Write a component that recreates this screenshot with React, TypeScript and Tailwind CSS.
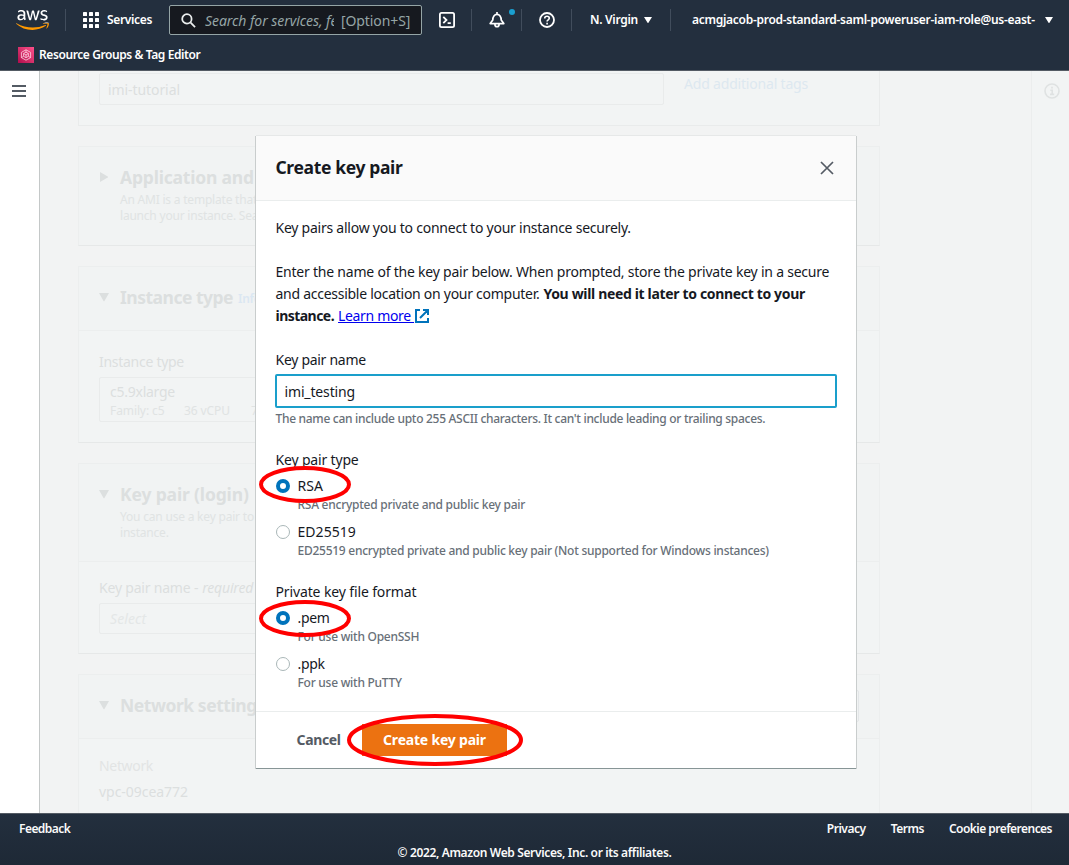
import React from "react";
import { FaAws } from "react-icons/fa";

function T({ c = "", children }: { c?: string; children: React.ReactNode }) {
  return <span className={"whitespace-nowrap " + c}>{children}</span>;
}

function Logo() {
  return (
    <div className="grid h-[28px] w-[33px] place-items-center">
      <FaAws className="col-start-1 row-start-1 h-[28px] w-[33px] text-white [clip-path:inset(0_0_38%_0)]" />
      <FaAws className="col-start-1 row-start-1 h-[28px] w-[33px] text-[#ff9900] [clip-path:inset(62%_0_0_0)]" />
    </div>
  );
}

function Divider({ c }: { c: string }) {
  return <span className={"h-[22px] w-px shrink-0 bg-[#414d5c] " + c} />;
}

function Caret() {
  return (
    <svg viewBox="0 0 8 6" className="h-[6px] w-[8px] shrink-0" fill="currentColor">
      <path d="M0 0h8L4.6 5.6a.7.7 0 0 1-1.2 0z" />
    </svg>
  );
}

function Header() {
  return (
    <header className="flex h-[71px] shrink-0 flex-col border-b border-[#545b64] bg-[#232f3e] text-white">
      <div className="flex h-[40px] items-center text-[12px] font-semibold leading-[20px]">
        <div className="ml-[16px]"><Logo /></div>
        <Divider c="ml-[16px]" />
        <svg viewBox="0 0 16 16" className="ml-[17px] h-[16px] w-[16px] shrink-0" fill="currentColor">
          {[0, 6, 12].map((y) => [0, 6, 12].map((x) => <rect key={x + "-" + y} x={x} y={y} width="4" height="4" rx=".6" />))}
        </svg>
        <T c="ml-[8px] w-[62px] shrink-0 tracking-[-0.34px]">Services</T>
        <div className="flex h-[30px] w-[253px] shrink-0 items-center rounded-[2px] border border-[#95a5a6] bg-[#16191f] text-[14px] font-normal text-[#95a5a6]">
          <svg viewBox="0 0 16 16" className="ml-[11px] h-[15px] w-[15px] shrink-0" fill="none" stroke="#eaeded" strokeWidth="1.9">
            <circle cx="6.3" cy="6.3" r="5" /><path d="m10 10 5 5" />
          </svg>
          <div className="ml-[9px] w-[129px] overflow-hidden whitespace-nowrap pt-px italic"><T c="tracking-[-0.06px]">Search for services, fe</T></div>
          <T c="ml-[7px] pt-px tracking-[-0.1px]">[Option+S]</T>
        </div>
        <svg viewBox="0 0 16 16" className="ml-[17px] h-[16px] w-[16px] shrink-0" fill="none" stroke="currentColor" strokeWidth="1.8">
          <rect x=".9" y=".9" width="14.2" height="14.2" rx="1.6" /><path d="M4.3 4.8 7.5 8l-3.2 3.2M8.6 11.2h3.2" />
        </svg>
        <Divider c="ml-[16px]" />
        <div className="relative ml-[17px] h-[16px] w-[16px] shrink-0">
          <svg viewBox="0 0 16 16" className="h-[16px] w-[16px]" fill="none" stroke="currentColor" strokeWidth="1.7">
            <path d="M8 0v2.2M1.2 11.6h13.6L12.2 8C12.2 4.6 10.600 2.400 8 2.400S3.800 4.600 3.800 8zM5.900 12.200a2.100 2.500 0 0 0 4.200 0" strokeLinejoin="round" />
          </svg>
          <span className="absolute left-[20px] top-[-3px] h-[6px] w-[6px] rounded-full bg-[#1a9fd0]" />
        </div>
        <Divider c="ml-[16px]" />
        <svg viewBox="0 0 16 16" className="ml-[17px] h-[16px] w-[16px] shrink-0" fill="none" stroke="currentColor" strokeWidth="1.8">
          <circle cx="8" cy="8" r="7" /><path d="M5.7 6.4c0-1.4 1-2.1 2.3-2.1s2.3.8 2.3 2c0 1.5-2.2 1.5-2.2 3.1M8.1 10.7v1.8" strokeWidth="1.6" />
        </svg>
        <Divider c="ml-[16px]" />
        <T c="ml-[18px] w-[54px] shrink-0 tracking-[-0.29px]">N. Virgin</T>
        <Caret />
        <Divider c="ml-[18px]" />
        <T c="ml-[21px] w-[353px] shrink-0 tracking-[-0.28px]">acmgjacob-prod-standard-saml-poweruser-iam-role@us-east-</T>
        <Caret />
      </div>
      <div className="flex h-[30px] items-center pl-[18px] text-[12px] font-semibold leading-[20px]">
        <span className="flex h-[16px] w-[16px] items-center justify-center bg-gradient-to-tr from-[#b0084d] to-[#ff4f8b]">
          <svg viewBox="0 0 12 12" className="h-[12px] w-[12px]" fill="none" stroke="#ffd5e4" strokeWidth=".8">
            <path d="M6 .8 10.6 3.4v5.2L6 11.2 1.4 8.6V3.4zM3.6 4.5 6 3.2l2.4 1.3v2.8L6 8.7 3.6 7.3zM6 6v2.7M3.6 4.5 6 6l2.4-1.5M1.4 8.6l2.2-1.3M10.6 8.6 8.4 7.3M6 .8v2.4" />
          </svg>
        </span>
        <T c="ml-[5px] tracking-[-0.41px]">Resource Groups &amp; Tag Editor</T>
      </div>
    </header>
  );
}

function SectionTitle({ open, c, children }: { open: boolean; c: string; children: React.ReactNode }) {
  return (
    <div className="flex h-[24px] items-center text-[17.5px] font-bold leading-[24px] text-[#dcdfdf]">
      <span className="w-[21px] shrink-0">
        <svg viewBox="0 0 10 10" className="h-[10px] w-[10px]" fill="currentColor">
          {open ? <path d="M0 1h10L5.6 8.7a.7.7 0 0 1-1.2 0z" /> : <path d="M1 0v10l7.7-4.4a.7.7 0 0 0 0-1.2z" />}
        </svg>
      </span>
      <T c={c}>{children}</T>
    </div>
  );
}

function Background() {
  return (
    <div className="flex h-[742px] grow overflow-hidden bg-[#f2f3f3] pl-[38px] text-[14px] leading-[22px] text-[#dcdfdf]">
      <div className="flex w-[802px] flex-col gap-[20px]">
        <section className="flex h-[55px] shrink-0 border border-t-0 border-[#e9ebeb] bg-[#f2f4f4] pl-[20px]">
          <div className="mt-[2px] h-[32px] w-[565px] rounded-[2px] border border-[#e9ebeb] px-[8px] pt-[5px]"><T c="tracking-[-0.08px]">imi-tutorial</T></div>
          <T c="ml-[20px] mt-[2px] text-[#dde8f0] tracking-[-0.19px]">Add additional tags</T>
        </section>
        <section className="h-[100px] shrink-0 border border-[#eceeee] border-b-[#e6e8e8] bg-[#f1f3f3] pl-[20px] pt-[18px]">
          <SectionTitle open={false} c="tracking-[-0.2px]">Application and</SectionTitle>
          <div className="flex flex-col pl-[21px] pt-[3px] text-[12px] leading-[16px] text-[#e0e3e3] tracking-[-0.21px]">
            <T>An AMI is a template that</T>
            <T>launch your instance. Sea</T>
          </div>
        </section>
        <section className="h-[177px] shrink-0 border border-[#eceeee] border-b-[#e6e8e8] bg-[#f2f4f4]">
          <div className="flex h-[64px] border-b border-[#eceeee] bg-[#f1f3f3] pl-[20px] pt-[18px]">
            <SectionTitle open c="tracking-[-0.5px]">Instance type</SectionTitle>
            <T c="ml-[5px] mt-[4px] text-[12px] font-semibold text-[#dbe7f2] leading-[20px] tracking-[-0.3px]">Info</T>
          </div>
          <div className="flex flex-col pl-[20px] pt-[20px]">
            <T c="tracking-[-0.28px]">Instance type</T>
            <div className="mt-[4px] h-[45px] w-[600px] rounded-[2px] border border-[#e9ebeb] px-[10px] pt-[3px]">
              <T c="tracking-[-0.25px]">c5.9xlarge</T>
              <div className="flex text-[12px] leading-[15px] text-[#e0e3e3] tracking-[-0.1px]">
                <T c="w-[74px]">Family: c5</T>
                <T c="w-[67px]">36 vCPU</T>
                <T>7</T>
              </div>
            </div>
          </div>
        </section>
        <section className="h-[191px] shrink-0 border border-[#eceeee] border-b-[#e6e8e8] bg-[#f2f4f4]">
          <div className="h-[98px] border-b border-[#eceeee] bg-[#f1f3f3] pl-[20px] pt-[18px]">
            <SectionTitle open c="tracking-[-0.15px]">Key pair (login)</SectionTitle>
            <div className="flex flex-col pl-[21px] pt-[3px] text-[12px] leading-[16px] text-[#e0e3e3] tracking-[-0.2px]">
              <T>You can use a key pair to</T>
              <T>instance.</T>
            </div>
          </div>
          <div className="flex flex-col pl-[20px] pt-[15px]">
            <div className="flex gap-[4px] tracking-[-0.2px]"><T>Key pair name -</T><T c="italic">required</T></div>
            <div className="mt-[4px] h-[31px] w-[600px] rounded-[2px] border border-[#e9ebeb] px-[10px] pt-[4px] italic text-[#e4e7e7]"><T c="tracking-[0.1px]">Select</T></div>
          </div>
        </section>
        <section className="h-[160px] shrink-0 border border-[#eceeee] bg-[#f2f4f4]">
          <div className="flex h-[64px] items-start justify-between border-b border-[#eceeee] bg-[#f1f3f3] pl-[20px] pr-[20px] pt-[15px]">
            <div className="pt-[3px]"><SectionTitle open c="tracking-[-0.45px]">Network setting</SectionTitle></div>
            <span className="h-[32px] w-[60px] rounded-[2px] border border-[#e3e6e8]" />
          </div>
          <div className="flex flex-col gap-[4px] pl-[20px] pt-[16px]">
            <T c="text-[#e2e4e4] tracking-[-0.33px]">Network</T>
            <T c="tracking-[-0.04px]">vpc-09cea772</T>
          </div>
        </section>
      </div>
      <div className="ml-auto flex w-[38px] justify-center border-l border-[#ebeded] bg-[#f2f4f4] pt-[12px]">
        <svg viewBox="0 0 16 16" className="ml-[2px] h-[16px] w-[16px]" fill="none" stroke="#dfe2e2" strokeWidth="1.6">
          <circle cx="8" cy="8" r="7" /><path d="M8 3.8v1.8M6.3 7.3h1.9v4M6 11.4h4.2" />
        </svg>
      </div>
    </div>
  );
}

function Ring({ c, w, h }: { c: string; w: number; h: number }) {
  return (
    <svg viewBox={`0 0 ${w} ${h}`} width={w} height={h} className={"pointer-events-none absolute " + c} fill="none" stroke="#ff0000" strokeWidth="4">
      <ellipse cx={w / 2} cy={h / 2} rx={w / 2 - 2} ry={h / 2 - 2} />
    </svg>
  );
}

type OptionProps = { on?: boolean; label: string; hint: string; ring?: string; c?: string };

function Option({ on, label, hint, ring, c = "" }: OptionProps) {
  return (
    <div className={"relative flex " + c}>
      <span className={on ? "mt-[4px] h-[14px] w-[14px] shrink-0 rounded-full border-[4.5px] border-[#0073bb] bg-white" : "mt-[4px] h-[14px] w-[14px] shrink-0 rounded-full border border-[#aab7b8] bg-white"} />
      <div className="flex flex-col pl-[8px]">
        <T c={label.startsWith(".") ? "tracking-[-0.3px]" : "tracking-[0.05px]"}>{label}</T>
        <T c="text-[12px] font-medium leading-[16px] tracking-[-0.26px] text-[#687078]">{hint}</T>
      </div>
      {ring && <Ring c={"left-[-17px] " + ring} w={92} h={37} />}
    </div>
  );
}

function Modal() {
  return (
    <div className="absolute left-[256px] top-[136px] flex h-[633px] w-[600px] flex-col border-b border-[#879596] bg-white text-[14px] leading-[22px] text-[#16191f] shadow-[-1px_0_0_#c9cdcd,1px_0_0_#c9cdcd,0_-1px_0_#e6e8e8]">
      <div className="flex h-[65px] items-center justify-between border-b border-[#eaeded] bg-[#fafafa] pl-[19.5px] pr-[22px]">
        <T c="pb-[2px] text-[17.5px] font-bold tracking-[-0.36px]">Create key pair</T>
        <svg viewBox="0 0 14 14" className="h-[14px] w-[14px]" stroke="#545b64" strokeWidth="1.7"><path d="m1 1 12 12M13 1 1 13" /></svg>
      </div>
      <div className="flex h-[510px] flex-col items-start px-[19.5px] pt-[16px]">
        <T c="tracking-[-0.24px]">Key pairs allow you to connect to your instance securely.</T>
        <T c="mt-[22px] tracking-[-0.22px]">Enter the name of the key pair below. When prompted, store the private key in a secure</T>
        <div className="flex gap-[4px]">
          <T c="tracking-[-0.27px]">and accessible location on your computer.</T>
          <T c="font-bold tracking-[-0.34px]">You will need it later to connect to your</T>
        </div>
        <div className="flex items-center">
          <T c="font-bold tracking-[-0.54px]">instance.</T>
          <T c="ml-[4px] text-[#0000ee] underline tracking-[-0.34px]">Learn more&nbsp;</T>
          <svg viewBox="0 0 14 14" className="ml-[1px] h-[14px] w-[14px]" fill="none" stroke="#0073bb" strokeWidth="2"><path d="M5 1H1v12h12V9M8 1h5v5M13 1 5 9" /></svg>
        </div>
        <T c="mt-[22px] tracking-[-0.29px]">Key pair name</T>
        <div className="-ml-[0.5px] mt-[3px] h-[34px] w-[562px] rounded-[2px] border-2 border-[#1a9fcb] px-[7.5px] pt-[5px]"><T c="tracking-[-0.15px]">imi_testing</T></div>
        <T c="mt-[3px] text-[12px] font-medium leading-[16px] tracking-[-0.3px] text-[#687078]">The name can include upto 255 ASCII characters. It can't include leading or trailing spaces.</T>
        <T c="mt-[22px] tracking-[-0.17px]">Key pair type</T>
        <Option on ring="top-[-9px]" c="mt-[4px]" label="RSA" hint="RSA encrypted private and public key pair" />
        <Option c="mt-[8px]" label="ED25519" hint="ED25519 encrypted private and public key pair (Not supported for Windows instances)" />
        <T c="mt-[22px] tracking-[-0.13px]">Private key file format</T>
        <Option on ring="top-[-7px]" c="mt-[4px]" label=".pem" hint="For use with OpenSSH" />
        <Option c="mt-[8px]" label=".ppk" hint="For use with PuTTY" />
      </div>
      <div className="flex grow items-center border-t border-[#eaeded] pl-[40.5px] font-bold">
        <T c="w-[65.5px] text-[#545b64] tracking-[-0.35px]">Cancel</T>
        <div className="relative flex h-[32px] w-[145px] items-center justify-center bg-[#ec7211] text-white">
          <T c="tracking-[-0.2px]">Create key pair</T>
          <Ring c="left-[-15px] top-[-10px]" w={176} h={52} />
        </div>
      </div>
    </div>
  );
}

function Footer() {
  return (
    <footer className="h-[52px] border-t border-[#545b64] bg-gradient-to-b from-[#232f3e] to-[#1e2936] text-[12px] font-semibold leading-[20px] text-[#fafafa]">
      <div className="flex h-[24px] items-center pl-[19px] pr-[17px] pt-[5px]">
        <T c="mr-auto tracking-[-0.55px]">Feedback</T>
        <T c="tracking-[-0.45px]">Privacy</T>
        <T c="ml-[25px] tracking-[-0.5px]">Terms</T>
        <T c="ml-[25px] tracking-[-0.53px]">Cookie preferences</T>
      </div>
      <div className="flex h-[28px] items-center justify-center pt-px"><T c="tracking-[-0.36px]">© 2022, Amazon Web Services, Inc. or its affiliates.</T></div>
    </footer>
  );
}

export default function App() {
  return (
    <div className="relative flex h-[865px] w-[1069px] flex-col overflow-hidden bg-[#232f3e] font-['Noto_Sans',sans-serif]">
      <Header />
      <div className="flex h-[742px] shrink-0">
        <aside className="w-[40px] shrink-0 border-r border-[#c4c8c8] bg-white pl-[12px] pt-[14px]">
          <svg viewBox="0 0 14 12" className="h-[12px] w-[14px]" fill="#545b64"><path d="M0 0h14v2H0zM0 5h14v2H0zM0 10h14v2H0z" /></svg>
        </aside>
        <Background />
      </div>
      <Footer />
      <Modal />
    </div>
  );
}
